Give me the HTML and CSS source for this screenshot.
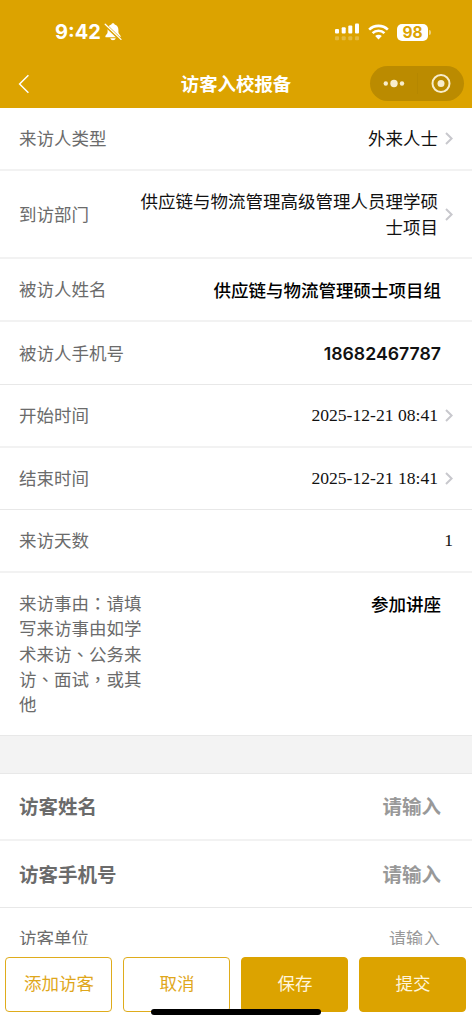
FILE: index.html
```html
<!DOCTYPE html>
<html lang="zh-CN">
<head>
<meta charset="utf-8">
<title>访客入校报备</title>
<link rel="stylesheet" href="styles.css">
</head>
<body>
<header class="top">
  <div class="status">
    <span class="clock">9:42</span>
    <svg class="bell" width="18" height="18" viewBox="0 0 18 18">
      <path d="M9 .3c-1 0-1.600.6-1.600 1.300C4.800 2.300 3.600 4.400 3.600 7v2.200c0 1.700-2.300 3-2.300 4.200 0 .6.400.9 1 .9h13.400c.6 0 1-.3 1-.9 0-1.200-2.300-2.500-2.300-4.200V7c0-2.600-1.200-4.700-3.800-5.400C10.600.9 10 .3 9 .3z" fill="#fff"/>
      <path d="M6.300 15.200h5.400c-.3 1.300-1.400 2-2.700 2s-2.400-.7-2.700-2z" fill="#fff"/>
      <path d="M0 .8 17.500 17.400" stroke="#dca300" stroke-width="3.200"/>
      <path d="M1.200 1.200 17 16.400" stroke="#fff" stroke-width="1.300" stroke-linecap="round"/>
    </svg>
    <svg class="signal" width="25" height="18" viewBox="0 0 25 18">
      <g fill="#fff"><rect x="0" y="6" width="4" height="4.600" rx="1"/><rect x="6.700" y="4.300" width="4" height="6.300" rx="1"/><rect x="13.300" y="2.500" width="4" height="8.100" rx="1"/><rect x="20" y=".5" width="4" height="10.100" rx="1"/></g>
      <g fill="#fff" opacity=".25"><rect x="0" y="13.200" width="4" height="4" rx="1"/><rect x="6.700" y="13.200" width="4" height="4" rx="1"/><rect x="13.300" y="13.200" width="4" height="4" rx="1"/><rect x="20" y="13.200" width="4" height="4" rx="1"/></g>
    </svg>
    <svg class="wifi" width="21" height="16" viewBox="0 0 22 16">
      <g fill="none" stroke="#fff" stroke-width="2.700"><path d="M1.200 5.500C6.500.3 15.500.3 20.800 5.500"/><path d="M4.800 9.100c3.400-3.300 9-3.300 12.400 0"/></g>
      <path d="M11 15.800 7.500 12.300c2-1.800 5-1.800 7 0z" fill="#fff"/>
    </svg>
    <span class="battery">98</span><i class="nub"></i>
  </div>
  <div class="nav">
    <svg class="back" width="12" height="20" viewBox="0 0 12 20"><path d="M10.400 1.200 1.600 10l8.800 8.800" fill="none" stroke="#fff" stroke-width="1.500"/></svg>
    <h1 class="title">访客入校报备</h1>
    <div class="capsule">
      <svg width="94" height="35" viewBox="0 0 94 35"><g fill="#f8edcc"><circle cx="15.800" cy="17.500" r="2.200"/><circle cx="24" cy="17.500" r="3.700"/><circle cx="32" cy="17.500" r="2.200"/><circle cx="71" cy="17.500" r="3.500"/></g><circle cx="71" cy="17.500" r="8.500" fill="none" stroke="#f8edcc" stroke-width="2"/><path d="M47.500 7v21" stroke="#b58700" stroke-width="1"/></svg>
    </div>
  </div>
</header>
<main class="form">
  <div class="row h64 soft"><label class="label">来访人类型</label><span class="value">外来人士</span><svg class="arrow" viewBox="0 0 8 13"><path d="M1 1l5.600 5.500L1 12"/></svg></div>
  <div class="row h88 soft"><label class="label">到访部门</label><span class="value wide">供应链与物流管理高级管理人员理学硕士项目</span><svg class="arrow" viewBox="0 0 8 13"><path d="M1 1l5.600 5.500L1 12"/></svg></div>
  <div class="row h63 soft"><label class="label">被访人姓名</label><span class="value strong">供应链与物流管理硕士项目组</span></div>
  <div class="row h63"><label class="label">被访人手机号</label><span class="value phone">18682467787</span></div>
  <div class="row h63 soft"><label class="label">开始时间</label><span class="value serif">2025-12-21 08:41</span><svg class="arrow" viewBox="0 0 8 13"><path d="M1 1l5.600 5.500L1 12"/></svg></div>
  <div class="row h62"><label class="label">结束时间</label><span class="value serif">2025-12-21 18:41</span><svg class="arrow" viewBox="0 0 8 13"><path d="M1 1l5.600 5.500L1 12"/></svg></div>
  <div class="row h63 soft"><label class="label">来访天数</label><span class="value serif days">1</span></div>
  <div class="row reason"><label class="label narrow">来访事由<span class="punct" lang="zh-TW">：</span>请填写来访事由如学术来访<span class="punct" lang="zh-TW">、</span>公务来访<span class="punct" lang="zh-TW">、</span>面试<span class="punct" lang="zh-TW">，</span>或其他</label><span class="value strong">参加讲座</span></div>
  <div class="gap"></div>
  <div class="row h67 soft big"><label class="label">访客姓名</label><span class="value hint">请输入</span></div>
  <div class="row h67 big"><label class="label">访客手机号</label><span class="value hint">请输入</span></div>
  <div class="row h62"><label class="label">访客单位</label><span class="value hint small">请输入</span></div>
</main>
<footer class="actions">
  <button class="btn">添加访客</button>
  <button class="btn">取消</button>
  <button class="btn primary">保存</button>
  <button class="btn primary">提交</button>
  <i class="home"></i>
</footer>
</body>
</html>
```
FILE: styles.css
```css
* { box-sizing: border-box; }
body {
  margin: 0;
  height: 1024px;
  display: flex;
  flex-direction: column;
  overflow: hidden;
  background: #fff;
  font-family: "Noto Sans CJK SC", sans-serif;
  font-size: 17.5px;
  line-height: 25.3px;
}
svg { display: block; flex: none; }

.top { flex: none; height: 107.500px; background: #dca300; color: #fff; }
.status { height: 60px; padding: 4px 41px 0 55px; display: flex; align-items: center; }
.clock { width: 46px; font: 700 20px/24px Inter, sans-serif; white-space: nowrap; }
.bell { margin-left: 3px; }
.signal { margin-left: auto; }
.wifi { margin-left: 7.500px; }
.battery {
  width: 31px; height: 17px; margin-left: 8.500px; border-radius: 5px;
  background: #fff; color: #dca300; text-align: center;
  font: 700 15.500px/17px Inter, sans-serif;
}
.nub { width: 2px; height: 5px; margin-left: 1px; border-radius: 0 2px 2px 0; background: #edcf7b; }
.nav { height: 47px; padding: 0 8px 0 18px; display: grid; grid-template-columns: 94px 1fr 94px; align-items: center; }
.title { margin: 0; padding: 0 10px 1px 0; text-align: center; font-size: 18.400px; line-height: 26px; font-weight: 700; }
.capsule { width: 94px; height: 35px; border-radius: 18px; background: #bb8b00; }

.form { flex: 1; min-height: 0; overflow: hidden; }
.row {
  display: flex; align-items: center;
  padding: 0 31px 1px 19px;
  border-bottom: 1px solid #e8e8e8;
}
.soft { border-bottom: 2px solid #f2f2f2; }
.h62 { height: 62px; }
.h63 { height: 63px; }
.h64 { height: 63.500px; }
.h67 { height: 67px; }
.h88 { height: 88px; }
.label { flex: none; color: #6b6b6b; }
.value { margin-left: auto; text-align: right; color: #111; }
.wide { width: 304px; }
.arrow {
  width: 8px; height: 13px; margin: 1px 4px 0 11px;
  fill: none; stroke: #c8c8cd; stroke-width: 2;
}
.row:has(.arrow) { padding-right: 15px; }
.row:has(.arrow) .value { margin-right: -4px; }
.strong { font-weight: 500; color: #000; padding-top: 1px; }
.phone { font: 600 17.700px/25px Inter, sans-serif; padding-top: 1px; }
.serif { font-family: "Liberation Serif", serif; font-size: 17.600px; padding-top: 2px; }
.days { margin-right: -12px; }
.reason { height: 163px; align-items: flex-start; padding-top: 17px; }
.narrow { width: 123px; }
.punct { font-family: "Noto Sans CJK TC", sans-serif; }
.gap { height: 38px; background: #f3f3f3; border-bottom: 1px solid #e8e8e8; }
.big { font-size: 19.500px; font-weight: 700; }
.hint { color: #999; }
.small { font-size: 17px; margin-right: 1px; }

.actions {
  position: relative; flex: none; height: 79px;
  padding: 12px 5.400px;
  display: grid; grid-template-columns: repeat(4, 107px); column-gap: 11px;
  background: #fff;
}
.btn {
  border: 1px solid #dfac1c; border-radius: 4px; padding: 0 0 4px;
  background: #fff; color: #dfa71b;
  font: 400 17.5px/25px "Noto Sans CJK SC", sans-serif;
}
.primary { background: #dca300; border-color: #dca300; color: #fff5dc; }
.home { position: absolute; left: 151px; top: 64px; width: 170px; height: 6px; border-radius: 3px; background: #000; }
```
